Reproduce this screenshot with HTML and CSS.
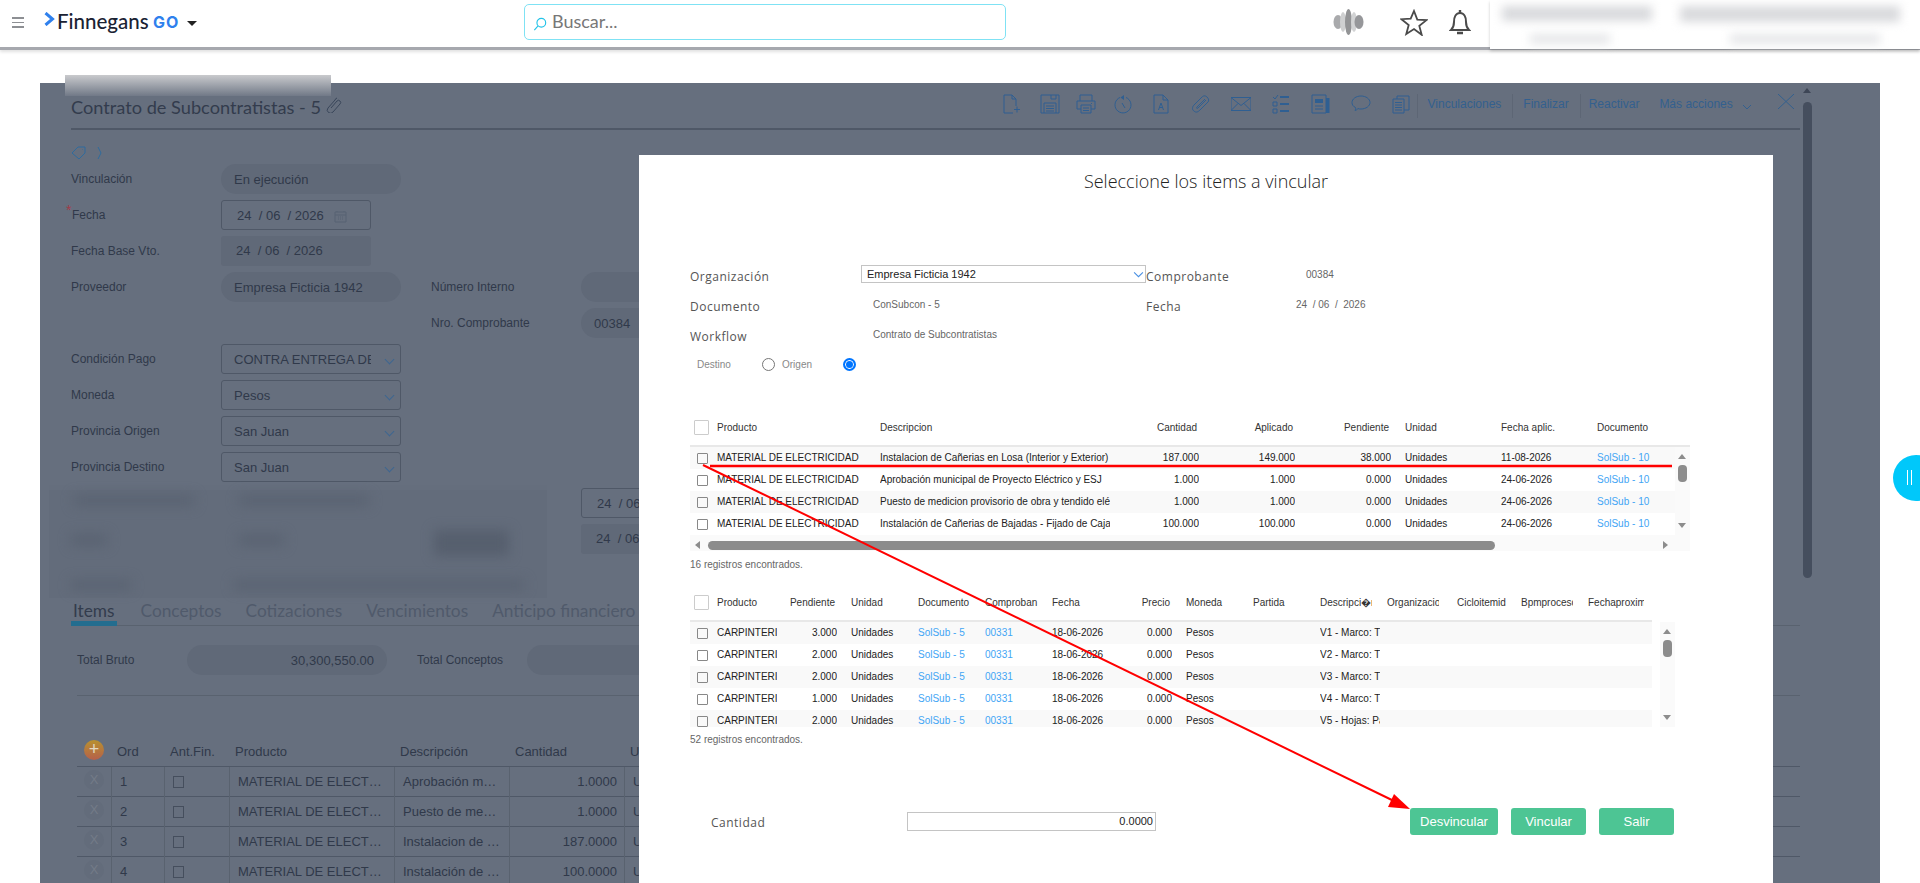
FILE: index.html
```html
<!DOCTYPE html>
<html>
<head>
    <title>Contrato de Subcontratistas - 5</title>
    <link rel="stylesheet" href="styles.css">
</head>
<body>
    <header class="topbar">
        <div class="hamburger"><span></span><span></span><span></span></div>
        <div class="logo">
            <svg class="logo-mark" viewBox="0 0 10 14"><path d="M1 1l7 6-7 6" fill="none" stroke="#2f80ed" stroke-width="3"/></svg>
            <span class="logo-name">Finnegans</span><span class="logo-go">GO</span>
            <span class="logo-caret"></span>
        </div>
        <div class="search">
            <svg viewBox="0 0 16 16" class="search-icon"><circle cx="9.5" cy="6.5" r="5" fill="none" stroke="#22c3e8" stroke-width="1.3"/><path d="M5.5 10.5L1.5 15" stroke="#22c3e8" stroke-width="1.3"/></svg>
            <span>Buscar...</span>
        </div>
        <div class="top-icons">
            <svg class="globe" viewBox="0 0 31 26">
                <ellipse cx="5" cy="13" rx="4.500" ry="7" fill="#a9aaac"/>
                <ellipse cx="10" cy="13" rx="3" ry="10" fill="#cfd0d1"/>
                <ellipse cx="15.5" cy="13" rx="3.500" ry="13" fill="#939496"/>
                <ellipse cx="21" cy="13" rx="3" ry="10" fill="#d2d3d4"/>
                <ellipse cx="26" cy="13" rx="4.500" ry="7" fill="#96979a"/>
            </svg>
            <svg class="star" viewBox="0 0 28 27"><path d="M14 2l3.3 8.6 9.2.5-7.2 5.800 2.400 8.900L14 20l-7.700 4.900 2.400-8.900-7.200-5.800 9.200-.5z" fill="none" stroke="#4a4a4a" stroke-width="1.8"/></svg>
            <svg class="bell" viewBox="0 0 22 27"><path d="M2 21c2-2 3-4 3-8 0-5 2-9 6-9s6 4 6 9c0 4 1 6 3 8z" fill="none" stroke="#4a4a4a" stroke-width="2"/><path d="M11 1v3M8 24h6" stroke="#4a4a4a" stroke-width="2.4"/></svg>
        </div>
        <div class="user-blur">
            <i class="blob b1"></i><i class="blob b2"></i><i class="blob b3"></i><i class="blob b4"></i>
        </div>
    </header>

    <div class="strip-blur"></div>

    <main class="panel">
        <div class="title-row">
            <h1>Contrato de Subcontratistas - 5
                <svg class="link-icon" viewBox="0 0 16 16"><path d="M5 11l6-7a2 2 0 0 1 3 3l-7 8a3 3 0 0 1-5-4l7-8a3 3 0 0 1 2-2" fill="none" stroke="#39465a" stroke-width="1"/></svg>
            </h1>
            <div class="toolbar">
                <div class="tool-group first">
                    <svg viewBox="0 0 20 20"><path d="M10 19H1V1h8l4 4v7M9 1v4h4M11 15.500h6M14 12.500v6"/></svg>
                    <svg viewBox="0 0 20 20"><path d="M1 1h18v18H1zM11 1v4h5V1M4 9h12v10M4 9v10M6 12h8M6 14.500h8M6 17h8"/></svg>
                    <svg viewBox="0 0 20 20"><path d="M4 7V1h12v6M1 7h18v8h-4M5 15H1V7M5 11h10v8H5zM7 14h6M7 16.500h6M15 9.500h1"/></svg>
                    <svg viewBox="0 0 20 20"><path d="M7 3.500A8 8 0 1 0 13 3.500M9 9l3 5"/><path class="solid" d="M11 1L7.500 3.500 11 6z"/></svg>
                </div>
                <div class="tool-group second">
                    <svg viewBox="0 0 20 20"><path d="M3 1h9l5 5v13H3zM12 1v5h5M7.500 16l2.500-7 2.500 7M8.500 13.500h3"/></svg>
                    <svg viewBox="0 0 20 20"><path d="M16 3c-2-2-4-1-5 0L3 11c-2 2-2 5 0 6 2 2 4 1 6-1l8-8c1-1 1-3-1-5M14 5l-8 8c-1 1 0 2 1 1l8-8"/></svg>
                    <svg viewBox="0 0 20 20"><path d="M0 3.500h20v13H0zM0 3.500l10 8 10-8M0 16.500l7-7M20 16.500l-7-7"/></svg>
                    <svg viewBox="0 0 20 20"><path d="M2 3l2 2 3-4M2 8h4v4H2zM2 15h4v4H2z"/><path class="thick" d="M9 3h9M9 10h9M9 17h9"/></svg>
                    <svg viewBox="0 0 20 20"><path d="M1 1h14v18H1zM4 12h8M4 15h8"/><path class="solid" d="M4 5h8v4H4zM15 4h3.500v15H15z"/></svg>
                    <svg viewBox="0 0 20 20"><path d="M10 2c5 0 9 3 9 6.500S15 15 10 15c-1 0-2 0-3-.5-1 1-2 2-3 2 .5-1 1-2 .5-3C2 12.500 1 10.500 1 8.500 1 5 5 2 10 2z"/></svg>
                    <svg viewBox="0 0 20 20"><path d="M2 5h11v14H2zM6 5V2h12v14h-5M4 8.500h7M4 11h7M4 13.500h7M4 16h7"/></svg>
                </div>
                <span class="tool-sep"></span>
                <span class="tool-link">Vinculaciones</span>
                <span class="tool-sep"></span>
                <span class="tool-link">Finalizar</span>
                <span class="tool-sep"></span>
                <span class="tool-link react">Reactivar</span>
                <span class="tool-link more">Más acciones</span>
                <svg class="more-caret" viewBox="0 0 10 6"><path d="M1 1l4 4 4-4"/></svg>
                <svg class="close-x" viewBox="0 0 20 15"><path d="M2 0l16 15M18 0L2 15"/></svg>
            </div>
        </div>

        <div class="tag-row">
            <svg viewBox="0 0 16 14" class="tag"><path d="M1 7l6-6h7v6l-6 6zM11 3.500h.5" fill="none" stroke="#2f6b9d" stroke-width="1"/></svg>
            <svg viewBox="0 0 6 14" class="tag-arrow"><path d="M1 1l3 6-3 6" fill="none" stroke="#2f6b9d" stroke-width="1"/></svg>
        </div>

        <div class="form-grid">
            <label>Vinculación</label><div class="pill">En ejecución</div><div></div><div></div><div></div>
            <label class="required"><i class="req">*</i>Fecha</label><div class="date boxed">24 &nbsp;/ 06 &nbsp;/ 2026<svg viewBox="0 0 13 13" class="cal"><path d="M1 2h11v10H1zM1 5h11M4 7h1M6 7h1M8 7h1M4 9h1M6 9h1M8 9h1M3 1v1M10 1v1"/></svg></div><div></div><div></div><div></div>
            <label>Fecha Base Vto.</label><div class="date plain">24 &nbsp;/ 06 &nbsp;/ 2026</div><div></div><div></div><div></div>
            <label>Proveedor</label><div class="pill">Empresa Ficticia 1942</div><div></div><label>Número Interno</label><div class="pill"></div>
            <div></div><div></div><div></div><label>Nro. Comprobante</label><div class="pill">00384</div>
            <label>Condición Pago</label><div class="combo"><span class="combo-text">CONTRA ENTREGA DE OBRA</span></div><div></div><div></div><div></div>
            <label>Moneda</label><div class="combo"><span class="combo-text">Pesos</span></div><div></div><div></div><div></div>
            <label>Provincia Origen</label><div class="combo"><span class="combo-text">San Juan</span></div><div></div><div></div><div></div>
            <label>Provincia Destino</label><div class="combo"><span class="combo-text">San Juan</span></div><div></div><div></div><div></div>
            <div></div><div></div><div></div><div></div><div class="date boxed">24 &nbsp;/ 06 &nbsp;/ 2026</div>
            <div></div><div></div><div></div><div></div><div class="date plain">24 &nbsp;/ 06 &nbsp;/ 2026</div>
        </div>
        <div class="form-blur"><i></i><i></i><i></i><i></i><i></i><i></i><i></i></div>

        <nav class="tabs">
            <span class="tab active">Items</span>
            <span class="tab">Conceptos</span>
            <span class="tab">Cotizaciones</span>
            <span class="tab">Vencimientos</span>
            <span class="tab">Anticipo financiero</span>
        </nav>

        <div class="totals">
            <label>Total Bruto</label><div class="pill right">30,300,550.00</div><div></div>
            <label>Total Conceptos</label><div class="pill"></div>
        </div>

        <div class="items">
            <div class="items-row head">
                <div><span class="add">+</span></div><div>Ord</div><div>Ant.Fin.</div><div>Producto</div><div>Descripción</div><div>Cantidad</div><div>Unidad</div>
            </div>
            <div class="items-row">
                <div><span class="del">X</span></div><div>1</div><div><i class="box"></i></div><div>MATERIAL DE ELECT…</div><div>Aprobación m…</div><div class="num">1.0000</div><div>Unidades</div>
            </div>
            <div class="items-row">
                <div><span class="del">X</span></div><div>2</div><div><i class="box"></i></div><div>MATERIAL DE ELECT…</div><div>Puesto de me…</div><div class="num">1.0000</div><div>Unidades</div>
            </div>
            <div class="items-row">
                <div><span class="del">X</span></div><div>3</div><div><i class="box"></i></div><div>MATERIAL DE ELECT…</div><div>Instalacion de …</div><div class="num">187.0000</div><div>Unidades</div>
            </div>
            <div class="items-row">
                <div><span class="del">X</span></div><div>4</div><div><i class="box"></i></div><div>MATERIAL DE ELECT…</div><div>Instalación de …</div><div class="num">100.0000</div><div>Unidades</div>
            </div>
        </div>

        <div class="panel-scroll"><span class="up"></span><span class="thumb"></span></div>
    </main>

    <section class="modal">
        <h2>Seleccione los items a vincular</h2>

        <div class="modal-form">
            <label>Organización</label>
            <div class="org-select">Empresa Ficticia 1942<svg viewBox="0 0 10 6"><path d="M1 1l4 4 4-4" fill="none" stroke="#4a90e2"/></svg></div>
            <label>Comprobante</label>
            <div class="value">00384</div>
            <label>Documento</label>
            <div class="value doc">ConSubcon - 5</div>
            <label>Fecha</label>
            <div class="value date-val">24 &nbsp;/ 06 &nbsp;/ &nbsp;2026</div>
            <label>Workflow</label>
            <div class="value doc">Contrato de Subcontratistas</div>
        </div>

        <div class="radios">
            <span class="r-destino">Destino</span><i class="radio"></i>
            <span class="r-origen">Origen</span><i class="radio on"></i>
        </div>

        <div class="grid-one">
            <div class="g1-row g-head">
                <div><i class="cb big"></i></div><div>Producto</div><div>Descripcion</div><div class="n">Cantidad</div><div class="n">Aplicado</div><div class="n">Pendiente</div><div class="u">Unidad</div><div>Fecha aplic.</div><div>Documento</div>
            </div>
            <div class="g-body">
                <div class="g-rows">
                    <div class="g1-row">
                        <div><i class="cb"></i></div><div>MATERIAL DE ELECTRICIDAD</div><div>Instalacion de Cañerias en Losa (Interior y Exterior)</div><div class="n">187.000</div><div class="n">149.000</div><div class="n">38.000</div><div class="u">Unidades</div><div>11-08-2026</div><div class="blue">SolSub - 10</div>
                    </div>
                    <div class="g1-row">
                        <div><i class="cb"></i></div><div>MATERIAL DE ELECTRICIDAD</div><div>Aprobación municipal de Proyecto Eléctrico y ESJ</div><div class="n">1.000</div><div class="n">1.000</div><div class="n">0.000</div><div class="u">Unidades</div><div>24-06-2026</div><div class="blue">SolSub - 10</div>
                    </div>
                    <div class="g1-row">
                        <div><i class="cb"></i></div><div>MATERIAL DE ELECTRICIDAD</div><div>Puesto de medicion provisorio de obra y tendido eléctrico</div><div class="n">1.000</div><div class="n">1.000</div><div class="n">0.000</div><div class="u">Unidades</div><div>24-06-2026</div><div class="blue">SolSub - 10</div>
                    </div>
                    <div class="g1-row">
                        <div><i class="cb"></i></div><div>MATERIAL DE ELECTRICIDAD</div><div>Instalación de Cañerias de Bajadas - Fijado de Cajas</div><div class="n">100.000</div><div class="n">100.000</div><div class="n">0.000</div><div class="u">Unidades</div><div>24-06-2026</div><div class="blue">SolSub - 10</div>
                    </div>
                </div>
                <div class="vscroll v1"><span class="up"></span><span class="thumb"></span><span class="down"></span></div>
            </div>
            <div class="hscroll"><span class="left"></span><span class="hthumb"></span><span class="right"></span></div>
        </div>
        <p class="found">16 registros encontrados.</p>

        <div class="grid-two">
            <div class="g2-row g-head">
                <div><i class="cb big"></i></div><div>Producto</div><div class="n">Pendiente</div><div class="u">Unidad</div><div>Documento</div><div>Comproban</div><div>Fecha</div><div class="n">Precio</div><div class="u">Moneda</div><div>Partida</div><div class="cut">Descripci�n</div><div class="cut">Organizacion</div><div class="cut">Cicloitemid</div><div class="cut">Bpmproceso</div><div class="cut">Fechaproxima</div>
            </div>
            <div class="g-body">
                <div class="g-rows two">
                    <div class="g2-row">
                        <div><i class="cb"></i></div><div class="cut">CARPINTERIA</div><div class="n">3.000</div><div class="u">Unidades</div><div class="blue">SolSub - 5</div><div class="blue">00331</div><div>18-06-2026</div><div class="n">0.000</div><div class="u">Pesos</div><div></div><div class="cut-s">V1 - Marco: Tipo</div><div></div><div></div><div></div><div></div>
                    </div>
                    <div class="g2-row">
                        <div><i class="cb"></i></div><div class="cut">CARPINTERIA</div><div class="n">2.000</div><div class="u">Unidades</div><div class="blue">SolSub - 5</div><div class="blue">00331</div><div>18-06-2026</div><div class="n">0.000</div><div class="u">Pesos</div><div></div><div class="cut-s">V2 - Marco: Tipo</div><div></div><div></div><div></div><div></div>
                    </div>
                    <div class="g2-row">
                        <div><i class="cb"></i></div><div class="cut">CARPINTERIA</div><div class="n">2.000</div><div class="u">Unidades</div><div class="blue">SolSub - 5</div><div class="blue">00331</div><div>18-06-2026</div><div class="n">0.000</div><div class="u">Pesos</div><div></div><div class="cut-s">V3 - Marco: Tipo</div><div></div><div></div><div></div><div></div>
                    </div>
                    <div class="g2-row">
                        <div><i class="cb"></i></div><div class="cut">CARPINTERIA</div><div class="n">1.000</div><div class="u">Unidades</div><div class="blue">SolSub - 5</div><div class="blue">00331</div><div>18-06-2026</div><div class="n">0.000</div><div class="u">Pesos</div><div></div><div class="cut-s">V4 - Marco: Tipo</div><div></div><div></div><div></div><div></div>
                    </div>
                    <div class="g2-row">
                        <div><i class="cb"></i></div><div class="cut">CARPINTERIA</div><div class="n">2.000</div><div class="u">Unidades</div><div class="blue">SolSub - 5</div><div class="blue">00331</div><div>18-06-2026</div><div class="n">0.000</div><div class="u">Pesos</div><div></div><div class="cut-s">V5 - Hojas: Pano</div><div></div><div></div><div></div><div></div>
                    </div>
                </div>
                <div class="vscroll v2"><span class="up"></span><span class="thumb"></span><span class="down"></span></div>
            </div>
        </div>
        <p class="found second">52 registros encontrados.</p>

        <div class="modal-foot">
            <label>Cantidad</label>
            <div class="qty">0.0000</div>
            <div class="actions">
                <button>Desvincular</button>
                <button class="small">Vincular</button>
                <button class="small">Salir</button>
            </div>
        </div>
    </section>

    <div class="side-tab"><span></span><span></span></div>

    <!-- flecha roja dibujada encima de la captura -->
    <svg class="annotation" viewBox="0 0 1920 883">
        <path d="M710 466H1672" stroke="#f00" stroke-width="2.4" fill="none"/>
        <path d="M703 465L1396 802" stroke="#f00" stroke-width="2" fill="none"/>
        <path d="M1410 809L1394 794 1388 807z" fill="#f00"/>
    </svg>
</body>
</html>
```

FILE: styles.css
```css
* {
    box-sizing: border-box;
}

html, body {
    height: 883px;
    overflow: hidden;
}

body {
    margin: 0;
    background: #fff;
    font-family: "Liberation Sans", Arial, sans-serif;
    color: #30394a;
    position: relative;
}

/* barra superior */
.topbar {
    height: 50px;
    display: flex;
    align-items: flex-start;
    background: #fff;
    border-bottom: 3px solid #a6a8ae;
    box-shadow: 0 2px 3px rgba(0,0,0,0.12);
    position: relative;
}

.hamburger {
    width: 12px;
    margin: 17px 0 0 12px;
    display: flex;
    flex-direction: column;
    gap: 3px;
}

.hamburger span {
    height: 1.5px;
    background: #8d8f93;
}

.logo {
    display: flex;
    align-items: center;
    height: 42px;
    margin-left: 20px;
    width: 480px;
}

.logo-mark {
    width: 11px;
    height: 14px;
    margin-right: 2px;
    margin-top: -4px;
}

.logo-name {
    font-family: Lato, sans-serif;
    font-size: 20.5px;
    font-weight: 500;
    color: #1a2233;
    width: 96px;
}

.logo-go {
    font-family: Inter, sans-serif;
    font-weight: 700;
    font-size: 16px;
    letter-spacing: 1px;
    color: #2f80ed;
    margin-top: 2px;
}

.logo-caret {
    margin: 5px 0 0 8px;
    border-left: 5px solid transparent;
    border-right: 5px solid transparent;
    border-top: 5px solid #222;
}

.search {
    width: 482px;
    height: 36px;
    margin-top: 4px;
    border: 1px solid #7fe2f4;
    border-radius: 5px;
    display: flex;
    align-items: center;
    padding: 0 0 2px 8px;
    font-family: Lato, sans-serif;
    font-size: 18px;
    color: #777;
}

.search-icon {
    width: 14px;
    height: 16px;
    margin: 5px 5px 0 0;
}

.top-icons {
    display: flex;
    align-items: flex-start;
    margin-left: 327px;
    width: 157px;
}

.globe {
    width: 31px;
    height: 26px;
    margin-top: 9px;
    filter: blur(0.5px);
}

.star {
    width: 28px;
    height: 27px;
    margin: 9px 0 0 36px;
}

.bell {
    width: 22px;
    height: 27px;
    margin: 9px 0 0 21px;
}

.user-blur {
    position: absolute;
    left: 1490px;
    top: 0;
    width: 430px;
    height: 49px;
    background: #fff;
    box-shadow: 0 2px 3px rgba(0,0,0,0.2);
}

.blob {
    position: absolute;
    background: #d9dadd;
    filter: blur(5px);
}

.b1 { left: 12px; top: 6px; width: 150px; height: 15px; }
.b2 { left: 190px; top: 6px; width: 220px; height: 16px; }
.b3 { left: 40px; top: 34px; width: 80px; height: 10px; background: #e6e7e9; }
.b4 { left: 240px; top: 34px; width: 150px; height: 10px; background: #e6e7e9; }

.strip-blur {
    position: absolute;
    left: 65px;
    top: 75px;
    width: 266px;
    height: 21px;
    z-index: 3;
    background: linear-gradient(#c9cacd, #717987);
}

/* panel oscurecido de fondo */
.panel {
    position: absolute;
    left: 40px;
    top: 83px;
    width: 1840px;
    height: 800px;
    overflow: hidden;
    background: #666f7e;
    padding-left: 31px;
    font-size: 12px;
}

.title-row {
    width: 1729px;
    height: 47px;
    display: flex;
    border-bottom: 2px solid #4f5867;
}

.title-row h1 {
    flex: none;
    width: 932px;
    margin: 0;
    padding-top: 13px;
    font-family: Lato, sans-serif;
    font-size: 18.2px;
    font-weight: 400;
    color: #333c4d;
}

.link-icon {
    width: 16px;
    height: 16px;
    vertical-align: 1px;
}

.toolbar {
    display: flex;
    flex: none;
    align-items: flex-start;
    padding-top: 11px;
    color: #33608f;
    white-space: nowrap;
}

.tool-group {
    display: flex;
    gap: 20px;
}

.tool-group.first {
    gap: 16.5px;
    margin-right: 18px;
}

.tool-group.second {
    margin-right: 6px;
}

.tool-group svg {
    width: 20px;
    height: 20px;
    fill: none;
    stroke: #2f5f92;
    stroke-width: 1;
}

.tool-group svg .solid {
    fill: #2f5f92;
    stroke: none;
}

.tool-group svg .thick {
    stroke-width: 2;
}

.tool-sep {
    width: 1px;
    height: 24px;
    background: #5d6675;
}

.tool-link {
    margin: 3px 11px 0 10px;
    font-size: 12px;
}

.tool-link.react {
    margin-left: 8px;
}

.tool-link.more {
    margin-left: 9px;
    margin-right: 9px;
}

.more-caret {
    width: 10px;
    height: 6px;
    margin-top: 10px;
    fill: none;
    stroke: #33608f;
}

.close-x {
    width: 20px;
    height: 15px;
    margin-left: 24px;
    fill: none;
    stroke: #33608f;
}

.tag-row {
    height: 34px;
    padding-top: 16px;
    display: flex;
    gap: 10px;
}

.tag { width: 16px; height: 14px; }
.tag-arrow { width: 6px; height: 14px; }

.form-grid {
    display: grid;
    grid-template-columns: 150px 180px 30px 150px 200px;
    grid-auto-rows: 30px;
    row-gap: 6px;
}

.form-grid label,
.totals label {
    line-height: 30px;
    position: relative;
}

.req {
    position: absolute;
    left: -5px;
    top: -5px;
    color: #a33a48;
    font-style: normal;
    font-size: 14px;
}

.required {
    padding-left: 1px;
}

.pill {
    background: #606978;
    border-radius: 15px;
    font-size: 13px;
    line-height: 31px;
    padding-left: 13px;
}

.pill.right {
    text-align: right;
    padding-right: 13px;
}

.date {
    width: 150px;
    font-size: 13px;
    line-height: 29px;
    padding-left: 15px;
    position: relative;
}

.boxed {
    border: 1px solid #4f5867;
    border-radius: 3px;
}

.plain {
    background: #606978;
    border-radius: 3px;
}

.cal {
    position: absolute;
    left: 112px;
    top: 9px;
    width: 13px;
    height: 13px;
    fill: none;
    stroke: #576272;
}

.combo {
    border: 1px solid #4f5867;
    border-radius: 3px;
    font-size: 13px;
    line-height: 29px;
    padding-left: 12px;
    position: relative;
}

.combo::after {
    content: "";
    position: absolute;
    right: 7px;
    top: 11px;
    width: 6px;
    height: 6px;
    border-right: 1.5px solid #3e6690;
    border-bottom: 1.5px solid #3e6690;
    transform: rotate(45deg);
}

.combo-text {
    display: block;
    width: 137px;
    overflow: hidden;
    white-space: nowrap;
}

.form-blur {
    position: absolute;
    left: 9px;
    top: 407px;
    width: 498px;
    height: 108px;
    background: #636c7b;
    box-shadow: 0 -5px 0 #656e7d;
}

.form-blur i {
    position: absolute;
    background: #5a6372;
    filter: blur(6px);
}

.form-blur i:nth-child(1) { left: 25px; top: 5px; width: 120px; height: 11px; }
.form-blur i:nth-child(2) { left: 190px; top: 5px; width: 130px; height: 11px; }
.form-blur i:nth-child(3) { left: 385px; top: 40px; width: 75px; height: 26px; background: #565f6e; }
.form-blur i:nth-child(4) { left: 185px; top: 90px; width: 290px; height: 10px; }
.form-blur i:nth-child(5) { left: 22px; top: 44px; width: 36px; height: 12px; }
.form-blur i:nth-child(6) { left: 190px; top: 44px; width: 45px; height: 12px; }
.form-blur i:nth-child(7) { left: 22px; top: 90px; width: 60px; height: 10px; }

.tabs {
    margin-top: 46px;
    width: 1729px;
    height: 26px;
    display: flex;
    gap: 24px;
    border-bottom: 1px solid #59626f;
    font-family: Lato, sans-serif;
    font-size: 17.3px;
    line-height: 22px;
    color: #505a6b;
}

.tab.active {
    color: #333c4d;
    padding: 0 2px;
    height: 26px;
    border-bottom: 5px solid #236d8f;
}

.totals {
    margin: 19px 0 0 6px;
    display: grid;
    grid-template-columns: 110px 200px 30px 110px 200px;
    grid-auto-rows: 30px;
    width: 1723px;
}

.items {
    margin: 20px 0 0 6px;
    border-top: 1px solid #59626f;
    width: 1723px;
    padding-top: 41px;
    font-size: 13px;
}

.items-row {
    display: grid;
    grid-template-columns: 34px 53px 65px 165px 115px 115px 100px;
    height: 30px;
    border-bottom: 1px solid #4f5867;
    line-height: 30px;
}

.items-row > div {
    padding-left: 8px;
    border-left: 1px solid #59626f;
}

.items-row > div:first-child {
    border-left: none;
    padding-left: 7px;
}

.items-row.head {
    height: 31px;
    margin-top: -1px;
    line-height: 31px;
}

.items-row.head > div {
    border-left: none;
    padding-left: 6px;
}

.items-row.head > div:first-child {
    padding-left: 7px;
}

.items-row .num {
    text-align: right;
    padding-right: 7px;
}

.add {
    display: block;
    width: 20px;
    height: 20px;
    margin-top: 4px;
    border-radius: 50%;
    background: linear-gradient(#b8912f, #b5604a);
    color: #e3d8c0;
    text-align: center;
    font-size: 18px;
    line-height: 19px;
}

.del {
    display: block;
    width: 20px;
    height: 20px;
    margin-top: 3px;
    border-radius: 50%;
    background: #636c7b;
    color: #737b88;
    text-align: center;
    line-height: 19px;
    font-size: 13px;
}

.box {
    display: block;
    width: 11px;
    height: 12px;
    margin-top: 9px;
    border: 1px solid #454e5d;
}

.panel-scroll {
    position: absolute;
    left: 1763px;
    top: 0;
    width: 9px;
}

.panel-scroll .up {
    display: block;
    margin: 5px 0 0 0;
    border-left: 4px solid transparent;
    border-right: 4px solid transparent;
    border-bottom: 5px solid #3d4656;
    width: 0;
}

.panel-scroll .thumb {
    display: block;
    margin-top: 9px;
    height: 476px;
    border-radius: 5px;
    background: #454e5e;
}

/* ventana modal */
.modal {
    position: absolute;
    left: 639px;
    top: 155px;
    width: 1134px;
    height: 728px;
    background: #fff;
    padding-left: 51px;
    overflow: hidden;
    font-size: 10px;
    color: #333;
}

.modal h2 {
    margin: 16px 0 0 -51px;
    text-align: center;
    font-family: "Open Sans", sans-serif;
    font-size: 18px;
    line-height: 20px;
    font-weight: 300;
    color: #222;
}

.modal-form {
    margin-top: 71px;
    display: grid;
    grid-template-columns: 171px 285px 150px 200px;
    grid-auto-rows: 30px;
}

.modal-form label,
.modal-foot label {
    font-family: "Open Sans", sans-serif;
    font-size: 12px;
    line-height: 30px;
    letter-spacing: 0.5px;
    color: #555;
}

.org-select {
    position: relative;
    height: 18px;
    margin-top: 3px;
    border: 1px solid #c4c4c4;
    padding-left: 5px;
    font-size: 11px;
    line-height: 16px;
    color: #222;
}

.org-select svg {
    position: absolute;
    right: 1px;
    top: 5px;
    width: 11px;
    height: 7px;
}

.value {
    font-size: 10px;
    line-height: 25px;
    color: #666;
    padding-left: 10px;
}

.value.doc {
    padding-left: 12px;
}

.value.date-val {
    padding-left: 0;
}

.radios {
    display: flex;
    align-items: center;
    height: 24px;
    margin-left: 7px;
    color: #888;
}

.r-destino { width: 65px; }
.r-origen { width: 61px; margin-left: 7px; }

.radio {
    width: 13px;
    height: 13px;
    border: 1px solid #767676;
    border-radius: 50%;
}

.radio.on {
    border: 2px solid #0075ff;
    background: #0075ff;
    box-shadow: inset 0 0 0 1px #fff;
}

.grid-one {
    margin-top: 41px;
    width: 1000px;
}

.g1-row {
    display: grid;
    grid-template-columns: 27px 163px 232px 87px 96px 96px 110px 96px 78px;
    height: 22px;
    line-height: 22px;
    white-space: nowrap;
}

.g2-row {
    display: grid;
    grid-template-columns: 27px 68px 52px 81px 67px 67px 68px 52px 81px 67px 67px 70px 64px 67px 64px;
    height: 22px;
    line-height: 22px;
    white-space: nowrap;
}

.g1-row > div,
.g2-row > div {
    overflow: hidden;
}

.g-head {
    height: 30px;
    border-bottom: 2px solid #e8e8e8;
}

.grid-two .g-head {
    width: 962px;
}

.g-body {
    display: flex;
}

.g-rows {
    width: 985px;
    color: #222;
}

.g-rows > div:nth-child(odd) {
    background: #f9f9f9;
}

.g-rows .g1-row > div:nth-child(3) {
    margin-right: 2px;
}

.n {
    text-align: right;
}

.g-head .n {
    padding-right: 2px;
}

.u {
    padding-left: 14px;
}

.blue {
    color: #42a5f5;
}

.cut {
    margin-right: 8px;
}

.g-head .cut:nth-child(11) { margin-right: 15px; }
.g-head .cut:nth-child(12) { margin-right: 18px; }
.g-head .cut:nth-child(13) { margin-right: 12px; }
.g-head .cut:nth-child(14) { margin-right: 15px; }
.g-head .cut:nth-child(15) { margin-right: 8px; }

.g2-row .cut-s {
    margin-right: 7px;
}

.cb {
    display: block;
    width: 11px;
    height: 11px;
    margin: 6px 0 0 7px;
    border: 1px solid #888;
    border-radius: 1px;
}

.cb.big {
    width: 15px;
    height: 15px;
    margin: 3px 0 0 4px;
    border-color: #ccc;
}

.vscroll {
    position: relative;
    width: 15px;
    background: #fafafa;
}

.v1 { height: 88px; }
.v2 { height: 105px; margin-left: 8px; }

.vscroll .up,
.vscroll .down {
    position: absolute;
    left: 3px;
    border-left: 4.5px solid transparent;
    border-right: 4.5px solid transparent;
}

.vscroll .up {
    top: 7px;
    border-bottom: 5px solid #8c8c8c;
}

.vscroll .down {
    bottom: 7px;
    border-top: 5px solid #8c8c8c;
}

.vscroll .thumb {
    position: absolute;
    left: 3px;
    top: 18px;
    width: 9px;
    height: 17px;
    border-radius: 4px;
    background: #8c8c8c;
}

.hscroll {
    position: relative;
    width: 1000px;
    height: 16px;
    background: #fafafa;
}

.hscroll .hthumb {
    position: absolute;
    left: 18px;
    top: 6px;
    width: 787px;
    height: 9px;
    border-radius: 5px;
    background: #8c8c8c;
}

.hscroll .left,
.hscroll .right {
    position: absolute;
    top: 6px;
    border-top: 4.500px solid transparent;
    border-bottom: 4.500px solid transparent;
}

.hscroll .left {
    left: 5px;
    border-right: 5px solid #8c8c8c;
}

.hscroll .right {
    left: 973px;
    border-left: 5px solid #8c8c8c;
}

.found {
    margin: 8px 0 0;
    line-height: 12px;
    color: #666;
}

.grid-two {
    margin-top: 21px;
}

.g-rows.two {
    width: 962px;
    height: 105px;
    overflow: hidden;
}

.found.second {
    margin-top: 7px;
}

.modal-foot {
    display: flex;
    align-items: flex-start;
    margin-top: 62px;
    padding-left: 21px;
}

.modal-foot label {
    width: 196px;
    margin-top: 0;
}

.qty {
    width: 249px;
    height: 19px;
    margin-top: 4px;
    border: 1px solid #c4c4c4;
    text-align: right;
    padding-right: 2px;
    font-size: 11px;
    line-height: 17px;
    color: #222;
}

.actions {
    display: flex;
    gap: 13px;
    margin-left: 254px;
}

.actions button {
    width: 88px;
    height: 27px;
    background: #4dc594;
    color: #fff;
    border: none;
    border-radius: 3px;
    font-family: "Liberation Sans", Arial, sans-serif;
    font-size: 13px;
    padding: 0;
}

.actions button.small {
    width: 75px;
}

.side-tab {
    position: absolute;
    left: 1893px;
    top: 455px;
    width: 46px;
    height: 46px;
    border-radius: 50%;
    background: #00c8fa;
    display: flex;
    gap: 3px;
    padding: 15px 0 0 14px;
}

.side-tab span {
    width: 1px;
    height: 15px;
    background: #fff;
}

.annotation {
    position: absolute;
    left: 0;
    top: 0;
    width: 1920px;
    height: 883px;
    pointer-events: none;
}
```
